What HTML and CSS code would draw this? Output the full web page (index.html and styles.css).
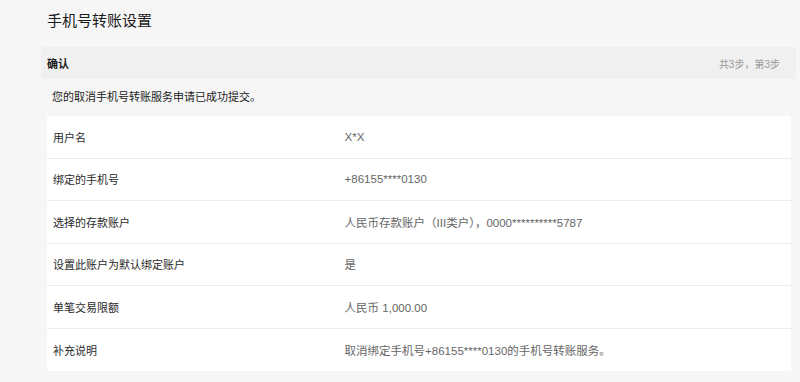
FILE: index.html
```html
<!DOCTYPE html>
<html lang="zh-CN">
<head>
    <meta charset="UTF-8">
    <meta name="viewport" content="width=device-width, initial-scale=1.0">
    <title>手机号转账设置</title>
    <link rel="stylesheet" href="styles.css">
</head>
<body>
    <div class="page">
        <h1 class="page-title">手机号转账设置</h1>

        <div class="step-bar">
            <span class="step-name">确认</span>
            <span class="step-count">共3步，第3步</span>
        </div>

        <p class="notice">您的取消手机号转账服务申请已成功提交。</p>

        <div class="detail-table">
            <div class="detail-row">
                <span class="detail-label">用户名</span>
                <span class="detail-value">X*X</span>
            </div>
            <div class="detail-row">
                <span class="detail-label">绑定的手机号</span>
                <span class="detail-value">+86155****0130</span>
            </div>
            <div class="detail-row">
                <span class="detail-label">选择的存款账户</span>
                <span class="detail-value">人民币存款账户（III类户），0000**********5787</span>
            </div>
            <div class="detail-row">
                <span class="detail-label">设置此账户为默认绑定账户</span>
                <span class="detail-value">是</span>
            </div>
            <div class="detail-row">
                <span class="detail-label">单笔交易限额</span>
                <span class="detail-value">人民币 1,000.00</span>
            </div>
            <div class="detail-row">
                <span class="detail-label">补充说明</span>
                <span class="detail-value">取消绑定手机号+86155****0130的手机号转账服务。</span>
            </div>
        </div>
    </div>
</body>
</html>
```

FILE: styles.css
```css
:root {
    --page-bg: #f6f6f6;
    --bar-bg: #f0f0f0;
    --line: #ededed;
    --text: #1a1a1a;
    --label: #2a2a2a;
    --muted: #666;
    --hint: #999;
}

body {
    margin: 0;
    padding: 0;
    background-color: var(--page-bg);
    color: var(--text);
    font-family: "Liberation Sans", "Noto Sans CJK SC", sans-serif;
    font-size: 11px;
}

.page {
    padding: 0 4px 0 41px;
}

.page-title {
    margin: 0 0 17px;
    padding: 10px 6px 0;
    font-size: 15px;
    font-weight: normal;
    line-height: 21px;
    color: var(--text);
}

.step-bar {
    height: 32px;
    display: flex;
    align-items: center;
    justify-content: space-between;
    padding: 0 16px 0 6px;
    margin-top: -1px;
    background-color: var(--bar-bg);
}

.step-name {
    font-weight: bold;
    color: var(--text);
}

.step-count {
    color: var(--hint);
    font-size: 10px;
}

.notice {
    margin: 0;
    padding: 0 11px;
    height: 37px;
    line-height: 37px;
    color: var(--text);
}

.detail-table {
    margin: 0 5px 0 6px;
    background: white;
}

.detail-row {
    display: flex;
    align-items: center;
    height: 42.5px;
    box-sizing: border-box;
    border-bottom: 1px solid var(--line);
}

.detail-row:last-child {
    border-bottom: none;
}

.detail-label {
    width: 40%;
    padding-left: 6px;
    box-sizing: border-box;
    color: var(--label);
}

.detail-value {
    flex: 1;
    color: var(--muted);
    font-size: 11.5px;
}
```
